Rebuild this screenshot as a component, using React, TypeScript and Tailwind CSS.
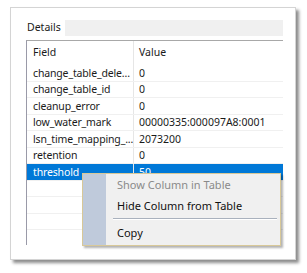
import React from 'react'

const rows: [string, string][] = [
  ['change_table_dele...', '0'],
  ['change_table_id', '0'],
  ['cleanup_error', '0'],
  ['low_water_mark', '00000335:000097A8:0001'],
  ['lsn_time_mapping_...', '2073200'],
  ['retention', '0'],
  ['threshold', '50'],
]

const font = { fontFamily: '"Noto Sans", "Open Sans", sans-serif' }

export default function App() {
  return (
    <div className="w-[307px] h-[273px] bg-white relative overflow-hidden text-[10.5px] text-[#1a1a1a]" style={font}>
      {/* Outer window panel */}
      <div className="absolute left-[10px] top-[7px] w-[286px] h-[253px] bg-white border border-[#d4d4d4] shadow-[3px_3px_3px_rgba(0,0,0,0.45)] pl-[15px] pr-[12px] pt-[11px] flex flex-col">
        {/* Tab strip */}
        <div className="flex h-[17px] items-end">
          <div className="w-[39px] h-full flex items-center pl-[1px] leading-none">Details</div>
          <div className="flex-1 h-[16px] bg-[#f0f0f0]" />
        </div>
        <div className="h-[4px]" />

        {/* Table */}
        <div className="flex flex-col border-t border-t-[#a8a8a8] border-l border-l-[#9a9aa8] h-[205px] overflow-hidden">
          <div className="flex h-[24px] shrink-0">
            <div className="w-[107px] border-r border-[#e6e6e6] flex items-center pl-[6px]">Field</div>
            <div className="flex-1 flex items-center pl-[5px]">Value</div>
          </div>
          {rows.map(([k, v], i) => {
            const sel = i === rows.length - 1
            return (
              <div
                key={k}
                className={
                  sel
                    ? 'flex h-[16.5px] shrink-0 bg-[#0078d7] text-white border-b border-[#f0f0f0]'
                    : 'flex h-[16.5px] shrink-0 border-b border-[#f0f0f0]'
                }
              >
                <div className="w-[107px] border-r border-[#e6e6e6] flex items-center pl-[6px] leading-none whitespace-nowrap overflow-hidden tracking-[-0.15px]">{k}</div>
                <div className="flex-1 flex items-center pl-[5px] leading-none whitespace-nowrap">{v}</div>
              </div>
            )
          })}
          {[0, 1, 2, 3].map((i) => (
            <div key={i} className="flex h-[16.5px] shrink-0 border-b border-[#f0f0f0]">
              <div className="w-[107px] border-r border-[#e6e6e6]" />
              <div className="flex-1" />
            </div>
          ))}
        </div>
      </div>

      {/* Context menu */}
      <div className="absolute left-[82px] top-[173px] w-[199px] h-[73px] bg-[#f0f0f0] border border-[#d8c898] shadow-[2px_2px_2px_rgba(0,0,0,0.3)] flex text-[11px]">
        <div className="w-[23px] bg-[#bfcadb]" />
        <div className="flex-1 flex flex-col pl-[11px] pr-[3px]">
          <div className="h-[22px] flex items-center text-[#8a8a8a]">Show Column in Table</div>
          <div className="h-[21px] flex items-center text-[#111]">Hide Column from Table</div>
          <div className="h-[4px] flex flex-col justify-center -ml-[4px]">
            <div className="h-px bg-[#a9b1bd]" />
            <div className="h-px bg-white" />
          </div>
          <div className="flex-1 flex items-center text-[#111]">Copy</div>
        </div>
      </div>
    </div>
  )
}
